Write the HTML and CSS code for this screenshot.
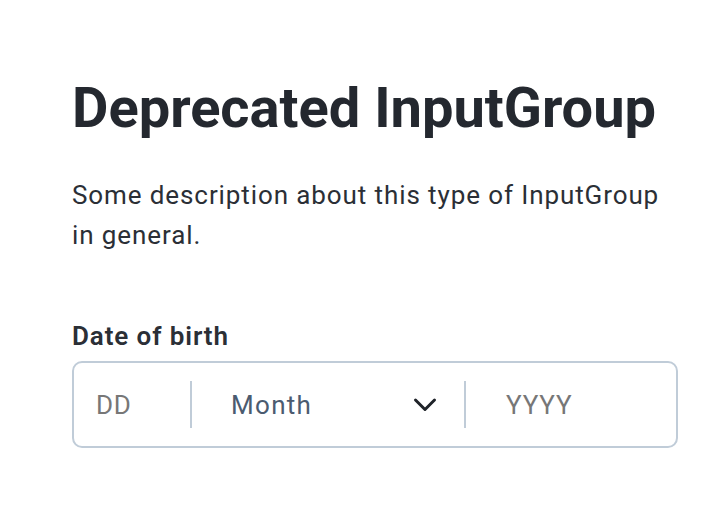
FILE: index.html
```html
<!DOCTYPE html>
<html>
<head>
<meta charset="utf-8">
<link rel="stylesheet" href="styles.css">
</head>
<body>
<main class="page">
  <h1 class="title">Deprecated InputGroup</h1>
  <p class="desc">Some description about this type of InputGroup in general.</p>
  <div class="field">
    <label class="label">Date of birth</label>
    <div class="group">
      <div class="cell cell-day"><span class="ph">DD</span></div>
      <div class="sep"></div>
      <div class="cell cell-month">
        <span class="month">Month</span>
        <svg class="chev" width="24" height="16" viewBox="0 0 24 16"><path d="M2.5 3l9.5 9.5 9.5-9.5" fill="none" stroke="#1f2329" stroke-width="3" stroke-linecap="round" stroke-linejoin="round"/></svg>
      </div>
      <div class="sep"></div>
      <div class="cell cell-year"><span class="ph">YYYY</span></div>
    </div>
  </div>
</main>
</body>
</html>
```
FILE: styles.css
```css
html, body { margin: 0; padding: 0; background: #fff; }
body { font-family: Roboto, "Noto Sans", sans-serif; color: #262a31; }
.page { padding: 76px 0 0 72px; width: 606px; }
.title { margin: 0; font-size: 56px; line-height: 64px; font-weight: 700; color: #24282f; }
.desc { margin: 35px 0 0; font-size: 26px; line-height: 40px; color: #2b2f36; letter-spacing: 0.9px; }
.field { margin-top: 63px; }
.label { display: block; font-size: 26px; line-height: 36px; font-weight: 600; color: #2b2f36; letter-spacing: 0.9px; }
.group { margin-top: 7px; display: flex; align-items: center; border: 2px solid #c0ccd8; border-radius: 10px; box-sizing: border-box; height: 87px; }
.sep { width: 2px; height: 47px; background: #c0ccd8; }
.cell { display: flex; align-items: center; font-size: 26px; height: 100%; box-sizing: border-box; letter-spacing: 0.8px; }
.cell-day { width: 116px; padding-left: 22px; }
.cell-month { width: 272px; padding-left: 39px; padding-right: 27px; justify-content: space-between; }
.cell-year { flex: 1; padding-left: 40px; }
.ph { color: #777; }
.month { color: #4b5b70; letter-spacing: 1.3px; }
.chev { display: block; }
```
